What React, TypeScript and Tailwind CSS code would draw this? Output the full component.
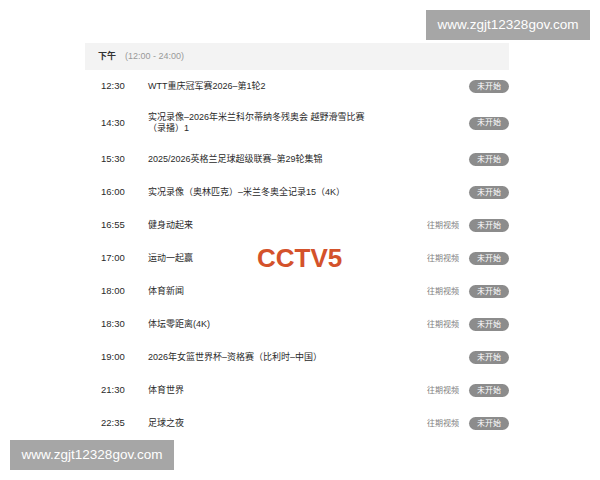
import React from "react";

type Row = { time: string; title: string[]; past?: boolean; tall?: boolean };

const rows: Row[] = [
  { time: "12:30", title: ["WTT重庆冠军赛2026–第1轮2"] },
  { time: "14:30", title: ["实况录像–2026年米兰科尔蒂纳冬残奥会 越野滑雪比赛", "（录播）1"], tall: true },
  { time: "15:30", title: ["2025/2026英格兰足球超级联赛–第29轮集锦"] },
  { time: "16:00", title: ["实况录像（奥林匹克）–米兰冬奥全记录15（4K）"] },
  { time: "16:55", title: ["健身动起来"], past: true },
  { time: "17:00", title: ["运动一起赢"], past: true },
  { time: "18:00", title: ["体育新闻"], past: true },
  { time: "18:30", title: ["体坛零距离(4K)"], past: true },
  { time: "19:00", title: ["2026年女篮世界杯–资格赛（比利时–中国）"] },
  { time: "21:30", title: ["体育世界"], past: true },
  { time: "22:35", title: ["足球之夜"], past: true },
];

const font = { fontFamily: '"Liberation Sans", "Noto Sans CJK SC", sans-serif' };

export default function App() {
  return (
    <div className="relative w-[600px] h-[480px] bg-white overflow-hidden" style={font}>
      <div className="pt-[43px] pl-[85px] w-[509px]">
        <div className="h-[27px] bg-[#f3f3f3] flex items-center pl-[13px]">
          <span className="text-[9px] font-semibold text-[#333]">下午</span>
          <span className="text-[9px] text-[#999] ml-[9px]">(12:00 - 24:00)</span>
        </div>
        {rows.map((r) => (
          <div key={r.time} className={`flex items-center ${r.tall ? "h-[40px]" : "h-[33px]"}`}>
            <div className="w-[63px] pl-[16px] text-[9.5px] text-[#2a2a2a]">{r.time}</div>
            <div className="flex-1 text-[9px] leading-[11px] text-[#2a2a2a]">
              {r.title.map((t, i) => (
                <div key={i}>{t}</div>
              ))}
            </div>
            {r.past && <span className="text-[8px] text-[#808080] mr-[10px]">往期视频</span>}
            <span className="w-[40px] h-[13px] rounded-full bg-[#8c8c8c] text-white text-[8px] flex items-center justify-center">
              未开始
            </span>
          </div>
        ))}
      </div>

      <div className="absolute left-[257px] top-[245px] text-[26px] font-bold text-[#d4522b] leading-none">
        CCTV5
      </div>

      <div className="absolute left-[426px] top-[10px] w-[164px] h-[30px] bg-[#a6a6a6] text-white text-[13.5px] flex items-center justify-center">
        www.zgjt12328gov.com
      </div>
      <div className="absolute left-[10px] top-[440px] w-[164px] h-[30px] bg-[#a6a6a6] text-white text-[13.5px] flex items-center justify-center">
        www.zgjt12328gov.com
      </div>
    </div>
  );
}
